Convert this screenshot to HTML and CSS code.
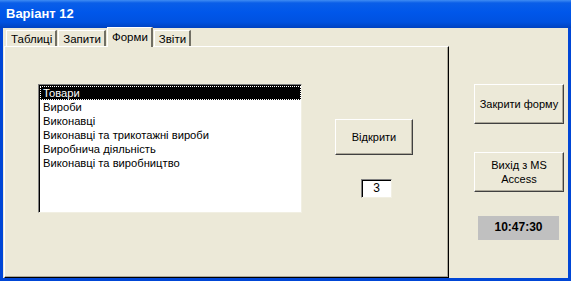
FILE: index.html
```html
<!DOCTYPE html>
<html lang="uk">
<head>
    <meta charset="UTF-8">
    <title>Варіант 12</title>
    <link rel="stylesheet" href="styles.css">
</head>
<body>
    <div class="window">
        <div class="titlebar">Варіант 12</div>
        <div class="frame">
            <div class="main">
                <div class="tabs">
                    <div class="tab">Таблиці</div>
                    <div class="tab">Запити</div>
                    <div class="tab active">Форми</div>
                    <div class="tab">Звіти</div>
                </div>
                <div class="panel">
                    <ul class="listbox">
                        <li class="selected">Товари</li>
                        <li>Вироби</li>
                        <li>Виконавці</li>
                        <li>Виконавці та трикотажні вироби</li>
                        <li>Виробнича діяльність</li>
                        <li>Виконавці та виробництво</li>
                    </ul>
                    <div class="open-group">
                        <button class="btn open-btn">Відкрити</button>
                        <div class="textbox">3</div>
                    </div>
                </div>
            </div>
            <div class="side">
                <button class="btn side-btn">Закрити форму</button>
                <button class="btn side-btn">Вихід з MS<br>Access</button>
                <div class="clock">10:47:30</div>
            </div>
        </div>
    </div>
</body>
</html>
```

FILE: styles.css
```css
body {
    margin: 0;
    font-family: "Liberation Sans", Arial, sans-serif;
    font-size: 11px;
    background-color: #ece9d8;
}
.window {
    width: 571px;
    height: 281px;
    display: flex;
    flex-direction: column;
    background-color: #ece9d8;
}
.titlebar {
    height: 28px;
    box-sizing: border-box;
    padding: 6px 0 0 6px;
    color: white;
    font-weight: bold;
    font-size: 13px;
    background: linear-gradient(#3f8cf3 0, #0a5ee8 3px, #0057ea 12px, #0052e0 22px, #0042c0 28px);
}
.frame {
    flex: 1;
    display: flex;
    border: 3px solid #0046d6;
    border-top: none;
}
.main {
    width: 445px;
    padding-left: 1px;
    display: flex;
    flex-direction: column;
}
.tabs {
    display: flex;
    margin-top: 2px;
    height: 16px;
    padding-left: 2px;
}
.tab {
    height: 17px;
    box-sizing: border-box;
    padding: 1px 3px 0 4px;
    border-top: 1px solid white;
    border-left: 1px solid white;
    border-right: 2px solid #716f64;
    margin-right: 1px;
    line-height: 14px;
    font-size: 11.5px;
}
.tab.active {
    height: 20px;
    margin-top: -3px;
    padding-top: 2px;
    background-color: #ece9d8;
    position: relative;
    z-index: 1;
}
.panel {
    flex: 1;
    display: flex;
    align-items: flex-start;
    border-top: 1px solid white;
    border-left: 1px solid white;
    border-right: 1px solid black;
    border-bottom: 1px solid black;
    box-shadow: inset -1px -1px #aca899;
}
.listbox {
    list-style: none;
    margin: 37px 0 0 33px;
    padding: 1px 0 0 0;
    width: 264px;
    height: 129px;
    box-sizing: border-box;
    background-color: white;
    border-top: 1px solid #808080;
    border-left: 1px solid #808080;
    border-right: 1px solid #f1efe2;
    border-bottom: 1px solid #f1efe2;
    box-shadow: inset 1px 1px black;
}
.listbox li {
    height: 14px;
    line-height: 14px;
    padding-left: 3px;
    margin-left: 1px;
    font-size: 11.2px;
}
.listbox li.selected {
    background-color: black;
    color: white;
    outline: 1px dotted white;
    outline-offset: -1px;
}
.open-group {
    display: flex;
    flex-direction: column;
    align-items: center;
    margin: 72px 0 0 33px;
}
.btn {
    font-family: "Liberation Sans", Arial, sans-serif;
    font-size: 11px;
    color: black;
    background-color: #ece9d8;
    border-top: 1px solid white;
    border-left: 1px solid white;
    border-right: 1px solid #404040;
    border-bottom: 1px solid #404040;
    box-shadow: inset -1px -1px #aca899;
    padding: 0;
    line-height: 14px;
}
.open-btn {
    width: 78px;
    height: 36px;
}
.textbox {
    margin-top: 24px;
    margin-left: 5px;
    width: 31px;
    height: 19px;
    box-sizing: border-box;
    background-color: white;
    text-align: center;
    line-height: 16px;
    font-size: 12px;
    border-top: 1px solid #808080;
    border-left: 1px solid #808080;
    border-right: 1px solid #f1efe2;
    border-bottom: 1px solid #f1efe2;
    box-shadow: inset 1px 1px black;
}
.side {
    flex: 1;
    display: flex;
    flex-direction: column;
    align-items: flex-start;
    padding: 56px 0 0 25px;
}
.side-btn {
    width: 90px;
    height: 40px;
    margin-bottom: 28px;
}
.clock {
    margin: -4px 0 0 4px;
    width: 81px;
    height: 24px;
    background-color: #c0c0c0;
    font-weight: bold;
    font-size: 12px;
    text-align: center;
    line-height: 22px;
}
```
